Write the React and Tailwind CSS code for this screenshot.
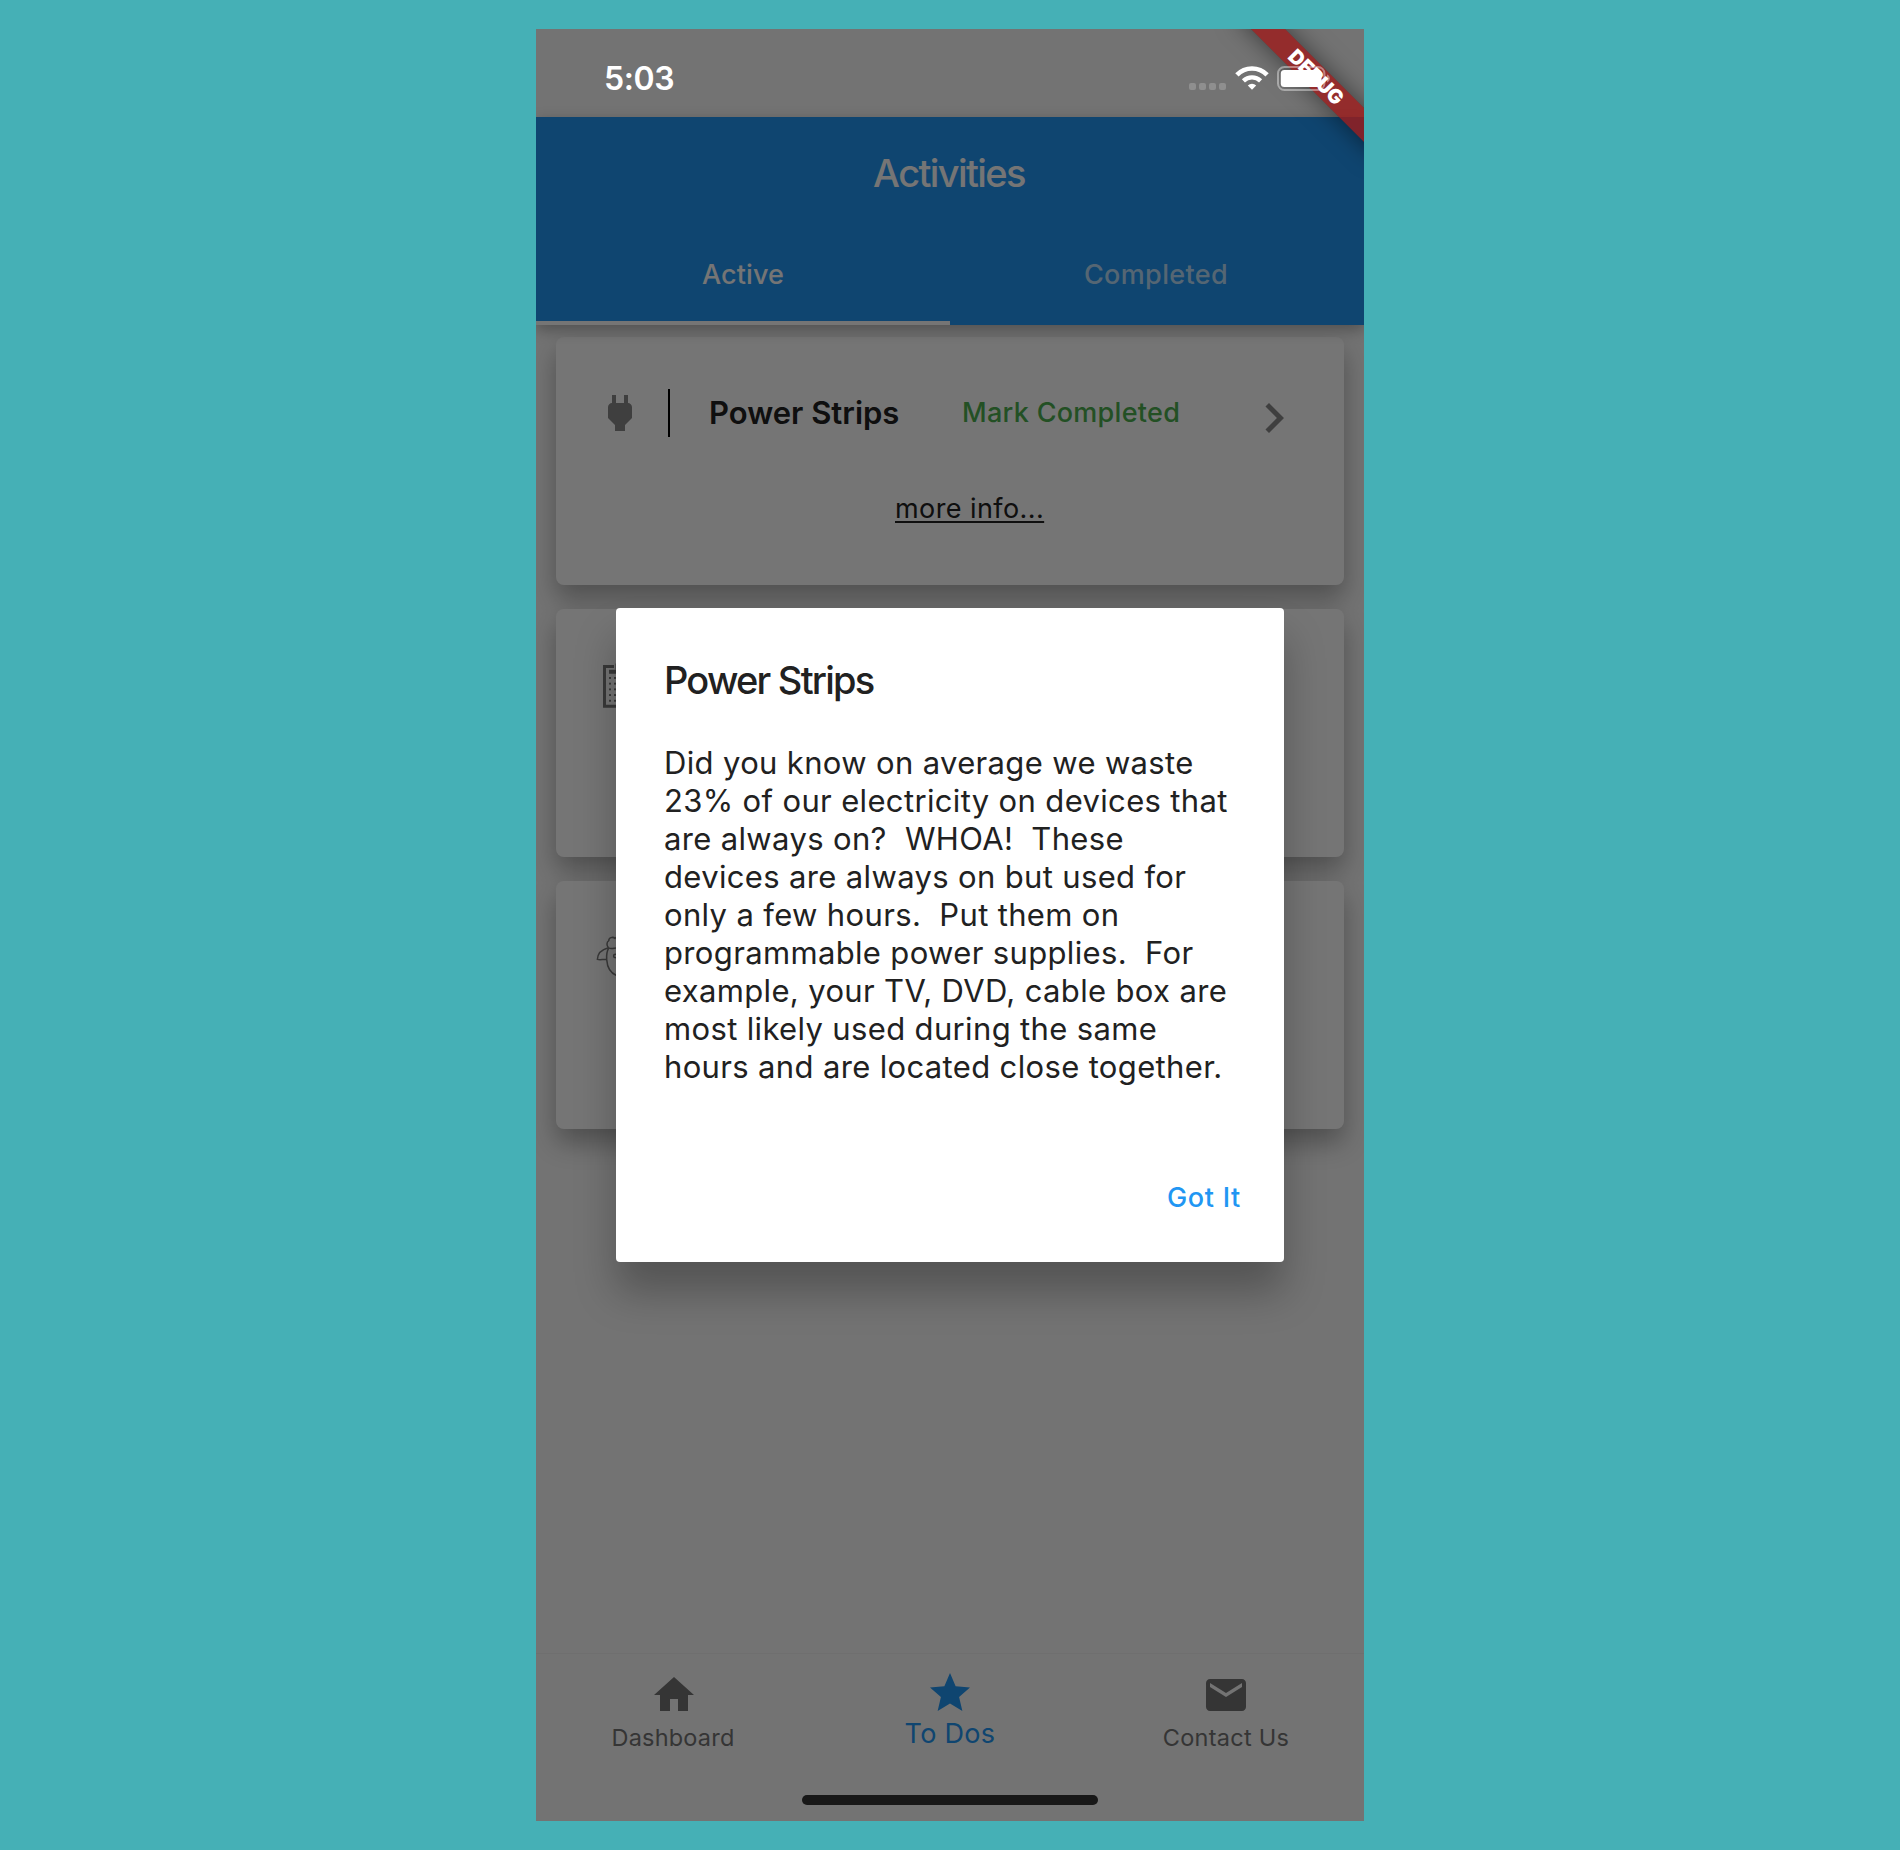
import React from "react";

function PlugIcon() {
  return (
    <svg viewBox="0 0 24 24" className="size-12 shrink-0 fill-[#8a8a8a]">
      <path d="M16.01 7L16 3h-2v4h-4V3H8v4h-.01C7 6.99 6 7.99 6 8.99v5.49L9.5 18v3h5v-3l3.5-3.51v-5.5c0-1-1-2-1.99-1.99z" />
    </svg>
  );
}

function CalendarIcon() {
  return (
    <svg viewBox="0 0 48 48" className="size-12 shrink-0 fill-[#7c7c7c]">
      <path d="M18 5.5H8.5v39.7h31V5.5H30" className="fill-none stroke-[#7c7c7c] stroke-[3]" />
      <path d="M13 8.7h22v4H13zM19.5 2.5h2v6h-2z" />
      {[16, 21.7, 27.4, 33.1, 38.8].map((y) =>
        [13, 18, 23, 28, 33].map((x) => (
          <rect key={`${x}-${y}`} x={x} y={y} width="2" height="1.9" />
        ))
      )}
    </svg>
  );
}

function SheepIcon() {
  return (
    <svg viewBox="0 0 48 48" className="size-12 shrink-0 fill-none stroke-[#7c7c7c] stroke-[1.5]">
      <path d="M12.6 14.8C10.4 13 10.4 9 12.8 7.6C12.6 4.6 17 3.4 19 5.4C21 2.6 27 2.6 29 5.4C31 3.4 35.4 4.6 35.2 7.6C37.6 9 37.6 13 35.4 14.8" />
      <path d="M12.6 14.8C16 17 20 13.5 24 15.4C28 13.5 32 17 35.4 14.8" />
      <path d="M12.4 14.8C6 16.5 1.6 20.5 1.4 26.4C4.5 27.4 7.5 26 10.7 26.6" />
      <path d="M35.6 14.8C42 16.5 46.4 20.5 46.6 26.4C43.5 27.4 40.5 26 37.3 26.6" />
      <path d="M12.6 15.2C10.6 19 10.4 23 10.7 26.6C11.2 34 14.5 40 20.5 42.5H27.5C33.5 40 36.8 34 37.3 26.6C37.6 23 37.4 19 35.4 15.2" />
      <circle cx="19.3" cy="23" r="1.7" />
      <circle cx="28.7" cy="23" r="1.7" />
    </svg>
  );
}

function ChevronIcon() {
  return (
    <svg viewBox="0 0 24 24" className="mt-[10px] size-[60px] shrink-0 fill-[#8a8a8a]">
      <path d="M10 6L8.59 7.41 13.17 12l-4.58 4.59L10 18l6-6z" />
    </svg>
  );
}

function WifiIcon() {
  return (
    <svg viewBox="0 0 34 24" className="ml-[9px] h-6 w-[34px] fill-none stroke-white">
      <path d="M1.9 8.9A21 21 0 0 1 32.1 8.9" className="stroke-[4.6]" />
      <path d="M8.4 14.8A12.4 12.4 0 0 1 25.6 14.8" className="stroke-[4.4]" />
      <path d="M12.8 19.4A6 6 0 0 1 21.2 19.4L17 23.8z" className="fill-white stroke-none" />
    </svg>
  );
}

function BatteryIcon() {
  return (
    <svg viewBox="0 0 53 25" className="ml-2 h-[25px] w-[53px] fill-white">
      <rect x="1" y="1" width="46.4" height="23" rx="6.5" className="fill-none stroke-white/40 stroke-2" />
      <rect x="3.8" y="4" width="40.7" height="17" rx="3.5" />
      <path d="M50 8.5c1.7.6 2.8 2.2 2.8 4s-1.1 3.400-2.8 4z" className="fill-white/40" />
    </svg>
  );
}

const CARD = "h-[248px] shrink-0 rounded-lg bg-white shadow-[0_14px_26px_0_rgba(0,0,0,0.3)]";

const NAV = [
  {
    label: "Dashboard",
    path: "M10 20v-6h4v6h5v-8h3L12 3 2 12h3v8z",
    item: "pt-[17px] text-[#757575]",
    text: "mt-[5px] pr-0.5 text-[23.5px] tracking-[0.2px]",
  },
  {
    label: "To Dos",
    path: "M12 17.27L18.18 21l-1.64-7.03L22 9.24l-7.19-.61L12 2 9.19 8.63 2 9.24l5.46 4.73L5.82 21z",
    item: "pt-[15px] text-[#2196f3]",
    text: "mt-[3px] text-[27px] tracking-[0.3px]",
  },
  {
    label: "Contact Us",
    path: "M20 4H4c-1.100 0-1.990.9-1.990 2L2 18c0 1.100.9 2 2 2h16c1.100 0 2-.9 2-2V6c0-1.100-.9-2-2-2zm0 4l-8 5-8-5V6l8 5 8-5v2z",
    item: "pt-[17px] text-[#757575]",
    text: "mt-[5px] text-[23.5px] tracking-[0.25px]",
  },
];

const BODY = [
  "Did you know on average we waste",
  "23% of our electricity on devices that",
  "are always on?  WHOA!  These",
  "devices are always on but used for",
  "only a few hours.  Put them on",
  "programmable power supplies.  For",
  "example, your TV, DVD, cable box are",
  "most likely used during the same",
  "hours and are located close together.",
];

function StatusBar() {
  return (
    <div className="absolute inset-x-0 top-0 z-20 flex h-[88px] justify-between pt-[37px] pr-[34px] pl-[68px] text-white">
      <span className="text-[32px] leading-[26px] font-semibold tracking-[-0.4px]">5:03</span>
      <div className="flex items-start">
        <div className="mt-[17px] flex gap-[3px]">
          {[0, 1, 2, 3].map((i) => (
            <span key={i} className="size-[7px] rounded-[2px] bg-white/20" />
          ))}
        </div>
        <WifiIcon />
        <BatteryIcon />
      </div>
    </div>
  );
}

function DebugBanner() {
  return (
    <div className="absolute top-[36px] -right-[52px] z-10 flex h-6 w-[200px] rotate-45 items-center justify-center bg-[#9c1a1a]/80 shadow-[0_0_24px_rgba(0,0,0,0.5)]">
      <span className="text-[20px] leading-6 font-black tracking-[-0.2px] text-white">DEBUG</span>
    </div>
  );
}

function Dialog() {
  return (
    <div className="absolute inset-0 flex items-center justify-center bg-black/54 pt-[88px] pb-[68px]">
      <div className="flex h-[654px] w-[668px] flex-col rounded-[4px] bg-white px-12 pt-12 text-[#212121] shadow-[0_30px_40px_0_rgba(0,0,0,0.27)]">
        <h2 className="text-[38px] leading-[48px] font-medium tracking-[-1.77px]">Power Strips</h2>
        <p className="mt-10 text-[31px] leading-[38px] tracking-[0.35px] whitespace-pre">{BODY.join("\n")}</p>
        <button className="mt-[88px] -mr-[5px] self-end text-[27px] leading-[48px] font-medium tracking-[0.7px] text-[#2196f3]">
          Got It
        </button>
      </div>
    </div>
  );
}

export default function App() {
  return (
    <div className="flex h-[1850px] w-[1900px] items-start justify-center bg-[#45b0b6] pt-[29px] font-['Inter',sans-serif]">
      <div className="relative flex h-[1792px] w-[828px] flex-col overflow-hidden bg-[#fafafa]">
        <StatusBar />
        <DebugBanner />

        <header className="relative mt-[88px] flex h-[208px] shrink-0 flex-col bg-[#2196f3] text-white shadow-[0_5px_14px_0_rgba(0,0,0,0.3)]">
          <h1 className="h-28 pr-0.5 text-center text-[38px] leading-[113px] font-medium tracking-[-1.6px]">Activities</h1>
          <nav className="grid h-24 grid-cols-2 text-center text-[27px] leading-[92px] font-medium">
            <span className="border-b-4 border-white tracking-[0.1px]">Active</span>
            <span className="pr-0.5 tracking-[0.35px] text-white/70">Completed</span>
          </nav>
        </header>

        <main className="flex grow flex-col gap-6 px-5 pt-3">
          <section className={CARD}>
            <div className="flex h-[100px] items-center pt-[52px] pl-10">
              <PlugIcon />
              <span className="ml-6 h-12 w-0.5 bg-black" />
              <span className="ml-[39px] w-[253px] text-[31px] leading-[48px] font-semibold text-[#212121]">
                Power Strips
              </span>
              <span className="w-[282px] text-[27px] leading-[46px] font-medium tracking-[0.3px] text-[#4caf50]">
                Mark Completed
              </span>
              <ChevronIcon />
            </div>
            <a className="mt-[52px] ml-[339px] inline-block text-[27px] leading-10 tracking-[0.42px] text-[#212121] underline decoration-[1.5px] underline-offset-[3px]">
              more info...
            </a>
          </section>
          <section className={CARD}>
            <div className="pt-[52px] pl-10">
              <CalendarIcon />
            </div>
          </section>
          <section className={CARD}>
            <div className="pt-[52px] pl-10">
              <SheepIcon />
            </div>
          </section>
        </main>

        <footer className="grid h-[168px] shrink-0 grid-cols-3 border-t border-[#f2f2f2] bg-[#fafafa]">
          {NAV.map((n) => (
            <div key={n.label} className={`flex flex-col items-center ${n.item}`}>
              <svg viewBox="0 0 24 24" className="size-12 fill-current">
                <path d={n.path} />
              </svg>
              <span className={`leading-7 ${n.text}`}>{n.label}</span>
            </div>
          ))}
        </footer>

        <Dialog />
        <div className="absolute bottom-4 left-1/2 h-[10px] w-[296px] -translate-x-1/2 rounded-full bg-[#181818]" />
      </div>
    </div>
  );
}
